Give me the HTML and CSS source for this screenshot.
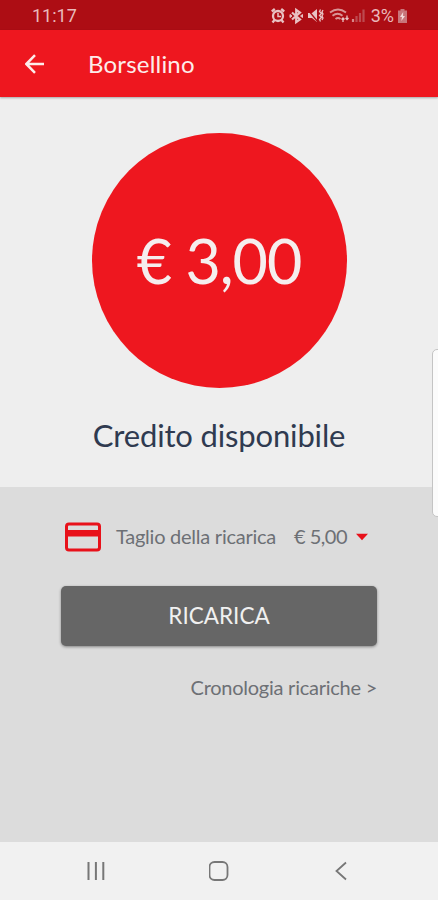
FILE: index.html
```html
<!DOCTYPE html>
<html lang="it">
	<head>
		<meta charset="utf-8">
		<title>Borsellino</title>
		<link rel="stylesheet" href="styles.css">
	</head>
	<body>
		<div class="status-bar">
			<span class="time">11:17</span>
			<svg class="status-icons" width="96" height="18" viewBox="0 0 96 18">
				<!-- alarm -->
				<g fill="none" stroke="#e9c2c3" stroke-width="2.300">
					<circle cx="7" cy="9" r="5"/>
					<path d="M.8 4.500l3-2.500M13.200 4.500l-3-2.500M3.500 13l-2 2.500M10.500 13l2 2.500"/>
					<path d="M7 6v3.500h3" stroke-width="1.500"/>
				</g>
				<!-- bluetooth -->
				<path d="M21 5.500l8 7-3.800 2.700V2.800L29 5.500l-8 7" fill="none" stroke="#e9c2c3" stroke-width="2.200"/>
				<path d="M19 7.500l2 1.500-2 1.500zM31.500 7.500l-2 1.500 2 1.500z" fill="#e9c2c3" stroke="#e9c2c3"/>
				<!-- muted -->
				<path d="M37 6h4l5-4v13l-5-4h-4z" fill="#e9c2c3"/>
				<path d="M37 3l10 12" stroke="#ad0d14" stroke-width="1.300"/>
				<path d="M49.500 2.500l-1 2 2 2-2 2 2 2-2 2 1 2M52 3l-1 2 1 2-1 2 1 2-1 2" fill="none" stroke="#e9c2c3" stroke-width="1.300"/>
				<!-- wifi -->
				<g fill="none" stroke="#d99496" stroke-width="1.900">
					<path d="M59 5.500q8-6 16 0M61.500 8.800q5-4 10 0M64.500 12q2.500-2 5 0"/>
				</g>
				<path d="M72 15v-4m-1.500 1.500l1.500-1.500 1.500 1.500M76 8.500v4m-1.500-1.500l1.500 1.500 1.500-1.500" fill="none" stroke="#e9c2c3" stroke-width="1.300"/>
				<!-- signal -->
				<path d="M82 15v-3" stroke="#d88789" stroke-width="2.200"/>
				<path d="M85.500 15V9M89 15V6M92.500 15V2.500" stroke="#bd4a50" stroke-width="2.200"/>
			</svg>
			<span class="battery-level">3%</span>
			<svg class="battery" width="9" height="14" viewBox="0 0 9 14">
				<path d="M2.500 0h4v1.500H9V14H0V1.500h2.500z" fill="#c8757a"/>
				<path d="M5.200 3L2 8h2l-.7 4L7 7H5z" fill="#f3dada"/>
			</svg>
		</div>

		<div class="toolbar">
			<svg class="back" width="20" height="20" viewBox="0 0 20 20">
				<path d="M19 10H2M10 1.200L1.300 10l8.700 8.800" fill="none" stroke="#fdecea" stroke-width="2.500"/>
			</svg>
			<h1>Borsellino</h1>
		</div>

		<div class="credit">
			<div class="amount"><span>€ 3,00</span></div>
			<h2>Credito disponibile</h2>
		</div>

		<div class="topup">
			<div class="topup-row">
				<svg width="36" height="30" viewBox="0 0 36 30">
					<rect x="1.500" y="2" width="33" height="26" rx="2.500" fill="none" stroke="#e8111a" stroke-width="3"/>
					<path d="M1 8h34v6.500H1z" fill="#e8111a"/>
				</svg>
				<span class="label">Taglio della ricarica</span>
				<span class="value">€ 5,00</span>
				<svg class="caret" width="12" height="8" viewBox="0 0 12 8">
					<path d="M0 .8h12L6 7.300z" fill="#e8111a"/>
				</svg>
			</div>
			<button class="topup-button">RICARICA</button>
			<a class="history">Cronologia ricariche &gt;</a>
		</div>

		<div class="nav-bar">
			<svg width="20" height="20" viewBox="0 0 20 20">
				<path d="M2.500 1v18M9.900 1v18M17.300 1v18" stroke="#777" stroke-width="2"/>
			</svg>
			<svg width="20" height="20" viewBox="0 0 20 20">
				<rect x="0.500" y="1" width="18" height="18" rx="5" fill="none" stroke="#777" stroke-width="1.800"/>
			</svg>
			<svg width="20" height="20" viewBox="0 0 20 20">
				<path d="M14 1.500L4.500 10l9.500 8.500" fill="none" stroke="#777" stroke-width="1.800"/>
			</svg>
		</div>

		<div class="edge-handle"></div>
	</body>
</html>
```
FILE: styles.css
```css
* {
	margin: 0;
	padding: 0;
	box-sizing: border-box;
}

body {
	position: relative;
	display: flex;
	flex-direction: column;
	height: 900px;
	overflow: hidden;
	background: #eee;
	font-family: Lato, sans-serif;
}

h1, h2 {
	font-weight: normal;
}

svg {
	display: block;
	flex: none;
}

.status-bar {
	display: flex;
	align-items: center;
	height: 30px;
	padding: 1px 31px 0 32px;
	background: #ad0d14;
	color: #e9b9bb;
	font-family: Roboto, sans-serif;
	font-size: 18px;
}

.status-icons {
	margin-left: auto;
}

.battery-level {
	margin: 0 4px 0 4px;
}

.toolbar {
	position: relative;
	display: flex;
	align-items: center;
	height: 67px;
	padding: 0 25px;
	background: #ee171f;
	box-shadow: 0 1px 2px rgba(0, 0, 0, 0.3);
}

.toolbar h1 {
	padding-top: 1px;
	margin-left: 43px;
	color: #fdecea;
	font-size: 24px;
	letter-spacing: 0.2px;
	line-height: 30px;
}

.credit {
	height: 390px;
	padding-top: 36px;
	text-align: center;
}

.amount {
	display: flex;
	align-items: center;
	justify-content: center;
	width: 255px;
	height: 255px;
	margin: 0 auto;
	border-radius: 50%;
	background: #ee171f;
	color: #f5eeee;
	font-size: 61px;
	letter-spacing: -1.1px;
}

.credit h2 {
	margin-top: 28px;
	color: #2f3a50;
	font-size: 31px;
	letter-spacing: -0.15px;
	line-height: 38px;
}

.topup {
	display: flex;
	flex: 1;
	flex-direction: column;
	padding: 34px 61px 0;
	background: #dcdcdc;
	color: #6d7075;
	font-size: 20px;
	letter-spacing: -0.25px;
}

.topup-row {
	display: flex;
	align-items: center;
	height: 32px;
	padding-left: 4px;
	white-space: nowrap;
}

.topup-row .label,
.topup-row .value {
	padding-bottom: 2px;
}

.topup-row .label {
	width: 160px;
	margin-left: 15px;
}

.topup-row .value {
	width: 54px;
	margin-left: 18px;
	letter-spacing: -0.5px;
}

.caret {
	margin-left: 8px;
}

.topup-button {
	height: 60px;
	margin-top: 33px;
	padding-bottom: 1px;
	border: none;
	border-radius: 5px;
	background: #666;
	box-shadow: 0 1px 3px rgba(0, 0, 0, 0.4);
	color: #f0f0f0;
	font-family: inherit;
	font-size: 22.5px;
}

.history {
	align-self: flex-end;
	margin-top: 29px;
}

.nav-bar {
	display: flex;
	align-items: center;
	justify-content: space-between;
	height: 58px;
	padding: 0 86px;
	background: #f1f1f1;
}

/* edge panel handle, sits over the page */
.edge-handle {
	position: absolute;
	top: 349px;
	right: -8px;
	width: 14px;
	height: 168px;
	border: 1px solid #c4c4c4;
	border-radius: 5px;
	background: #fbfbfb;
}
```
